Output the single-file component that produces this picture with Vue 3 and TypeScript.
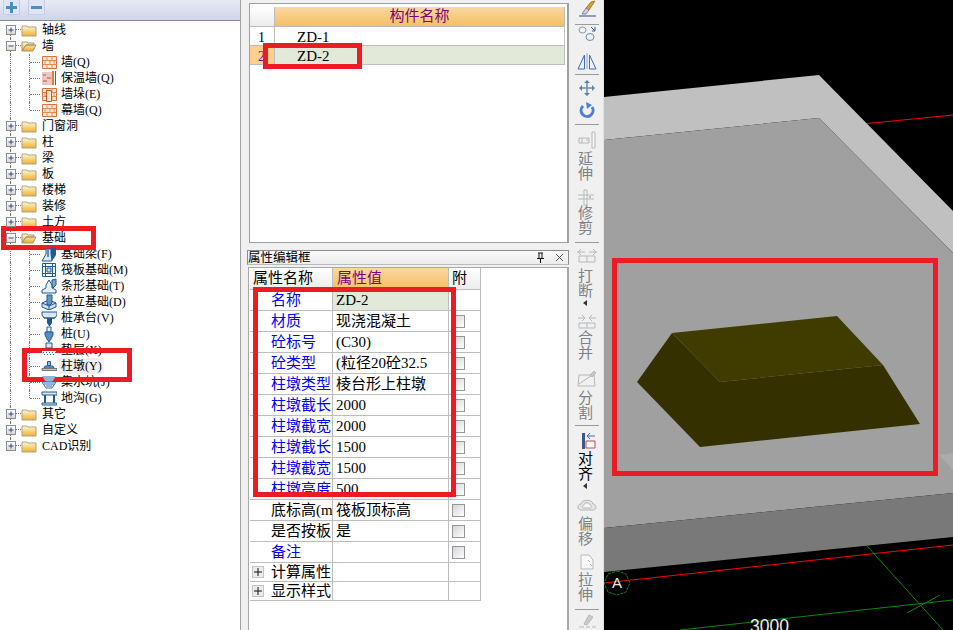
<template>
  <div class="app">
    <svg class="defs" width="0" height="0">
      <defs>
        <linearGradient id="fold" x1="0" y1="0" x2="0" y2="1">
          <stop offset="0" stop-color="#fff8d8" />
          <stop offset="1" stop-color="#eeae2c" />
        </linearGradient>
      </defs>
    </svg>

    <!-- left tree -->
    <aside class="left">
      <div class="tree-bar">
        <span class="tb-btn">
          <svg width="13" height="13" viewBox="0 0 13 13"><path d="M1 6.500h11M6.500 1v11" stroke="#4a8fc4" stroke-width="3" /></svg>
        </span>
        <span class="tb-btn">
          <svg width="13" height="13" viewBox="0 0 13 13"><path d="M1 6.500h11" stroke="#4a8fc4" stroke-width="3" /></svg>
        </span>
      </div>
      <div class="tree">
        <div
          v-for="(n, i) in nodes"
          :key="i"
          class="node"
          :class="{ child: n.child, 'last-child': n.lastChild, 'last-root': i === nodes.length - 1 }"
        >
          <template v-if="!n.child">
            <span class="exp">
              <svg width="8" height="8" viewBox="0 0 8 8">
                <path d="M1.500 4h5" stroke="#2a4f9c" />
                <path v-if="!n.open" d="M4 1.500v5" stroke="#2a4f9c" />
              </svg>
            </span>
            <svg class="ico" width="16" height="16" viewBox="0 0 16 16">
              <path v-if="n.open" d="M1 13V4h5l1 1h6v2H5L1 13zM1 13l4-6h10l-3 6z" fill="url(#fold)" stroke="#a8986c" />
              <path v-else d="M1 4h5l1 1h8v9H1z" fill="url(#fold)" stroke="#b0a27c" />
            </svg>
          </template>
          <template v-else>
            <i class="hdot"></i>
            <svg class="ico" width="16" height="16" viewBox="0 0 16 16">
              <path v-for="(p, k) in treeIcons[n.icon ?? 'brick']" :key="k" :d="p.d" :stroke="p.s ?? 'none'" :fill="p.f ?? 'none'" />
            </svg>
          </template>
          <span class="txt" :class="{ picked: n.picked }">{{ n.label }}</span>
        </div>
      </div>
    </aside>

    <!-- middle panels -->
    <main class="mid">
      <section class="names">
        <div class="names-grid">
          <div class="nrow nhead">
            <span class="rh"></span>
            <span class="nh">构件名称</span>
          </div>
          <div class="nrow">
            <span class="rh">1</span>
            <span class="nc">ZD-1</span>
          </div>
          <div class="nrow sel">
            <span class="rh">2</span>
            <span class="nc">ZD-2</span>
          </div>
        </div>
      </section>

      <div class="titlebar">
        <span>属性编辑框</span>
        <span class="tbtns">
          <svg width="11" height="11" viewBox="0 0 11 11"><path d="M3 1h5M4 1v5M7 1v5M2 6.500h7M5.500 6.500V11" stroke="#111" fill="none" /></svg>
          <svg width="11" height="11" viewBox="0 0 11 11"><path d="M2 2l7 7M9 2l-7 7" stroke="#555" fill="none" /></svg>
        </span>
      </div>
      <section class="props">
        <div class="prow phead">
          <span class="pc pname-h">属性名称</span>
          <span class="pc pval-h">属性值</span>
          <span class="pc pfu-h">附</span>
        </div>
        <div v-for="p in props" :key="p.name + p.value" class="prow" :class="{ small: p.group }">
          <span class="pc pname" :class="{ blue: p.blue }">
            <span v-if="p.group" class="plus">
              <svg width="8" height="8" viewBox="0 0 8 8"><path d="M0 4h8M4 0v8" stroke="#111" /></svg>
            </span>
            {{ p.name }}
          </span>
          <span class="pc pval" :class="{ cur: p.cur }">{{ p.value }}</span>
          <span class="pc pfu"><i v-if="p.check" class="chk"></i></span>
        </div>
      </section>
    </main>

    <!-- vertical tools -->
    <nav class="tools">
      <template v-for="(t, i) in tools" :key="i">
        <hr v-if="t.sep" class="sep" :style="{ marginTop: t.mt + 'px' }" />
        <svg
          v-else-if="t.icon"
          class="tool-ico"
          :width="24"
          :height="t.h ?? 18"
          :viewBox="`0 0 24 ${t.h ?? 18}`"
          :style="{ marginTop: t.mt + 'px' }"
        >
          <path
            v-for="(p, k) in toolIcons[t.icon]"
            :key="k"
            :d="p.d"
            :stroke="p.s ?? 'none'"
            :stroke-width="p.w ?? 1"
            :fill="p.f ?? 'none'"
          />
        </svg>
        <div v-else class="tool-label" :class="{ on: t.on }" :style="{ marginTop: t.mt + 'px' }">
          <span v-for="c in t.label" :key="c">{{ c }}</span>
          <i v-if="t.arrow" class="arrow"></i>
        </div>
      </template>
    </nav>

    <!-- 3d view -->
    <div class="view">
      <svg width="349" height="630" viewBox="604 0 349 630">
        <path d="M867 123.500L953 115" stroke="#f00" fill="none" />
        <path d="M604 97L819 75L953 211V253L819 118L604 140z" fill="#c0c0c0" />
        <path d="M604 140L819 118L953 253V493L604 528z" fill="#a0a0a0" />
        <path d="M939 455L953 453V470z" fill="#ababab" />
        <path d="M604 528L953 493V537L604 572z" fill="#797979" />
        <path d="M672 333L837 316L883 365L720 382z" fill="#403c00" />
        <path d="M637 382L672 333L720 382L883 365L920 424L700 447z" fill="#343000" />
        <path d="M604 583L953 545" stroke="#f00" fill="none" />
        <path d="M867 546L943 630" stroke="#0a8a0a" fill="none" />
        <path d="M680 630L953 600" stroke="#0a8a0a" fill="none" />
        <path d="M907 613L940 595" stroke="#0a8a0a" fill="none" />
        <path d="M617 571l9 3l4 9l-4 9l-9 3l-9-3l-4-9l4-9z" stroke="#0a8a0a" fill="none" stroke-dasharray="3 1" />
        <text x="612" y="588" class="axis">A</text>
        <text x="750" y="632" class="dim">3000</text>
      </svg>
    </div>

    <!-- red annotations -->
    <i class="mark m-base"></i>
    <i class="mark m-pier"></i>
    <i class="mark m-zd"></i>
    <i class="mark m-props"></i>
    <i class="mark m-model"></i>
  </div>
</template>

<script setup lang="ts">
interface TreeNode {
  label: string
  child?: boolean
  open?: boolean
  lastChild?: boolean
  picked?: boolean
  icon?: string
}
interface PropRow {
  name: string
  value: string
  blue?: boolean
  check?: boolean
  cur?: boolean
  group?: boolean
}
interface Shape {
  d: string
  s?: string
  f?: string
  w?: number
}
interface Tool {
  mt: number
  sep?: boolean
  icon?: string
  h?: number
  label?: string
  on?: boolean
  arrow?: boolean
}

const nodes: TreeNode[] = [
  { label: '轴线' },
  { label: '墙', open: true },
  { label: '墙(Q)', child: true, icon: 'brick' },
  { label: '保温墙(Q)', child: true, icon: 'insul' },
  { label: '墙垛(E)', child: true, icon: 'pier' },
  { label: '幕墙(Q)', child: true, icon: 'brick', lastChild: true },
  { label: '门窗洞' },
  { label: '柱' },
  { label: '梁' },
  { label: '板' },
  { label: '楼梯' },
  { label: '装修' },
  { label: '土方' },
  { label: '基础', open: true },
  { label: '基础梁(F)', child: true, icon: 'beam' },
  { label: '筏板基础(M)', child: true, icon: 'raft' },
  { label: '条形基础(T)', child: true, icon: 'strip' },
  { label: '独立基础(D)', child: true, icon: 'solo' },
  { label: '桩承台(V)', child: true, icon: 'cap' },
  { label: '桩(U)', child: true, icon: 'pile' },
  { label: '垫层(X)', child: true, icon: 'bed' },
  { label: '柱墩(Y)', child: true, icon: 'zd', picked: true },
  { label: '集水坑(J)', child: true, icon: 'sump' },
  { label: '地沟(G)', child: true, icon: 'ditch', lastChild: true },
  { label: '其它' },
  { label: '自定义' },
  { label: 'CAD识别' },
]

const props: PropRow[] = [
  { name: '名称', value: 'ZD-2', blue: true, cur: true },
  { name: '材质', value: '现浇混凝土', blue: true, check: true },
  { name: '砼标号', value: '(C30)', blue: true, check: true },
  { name: '砼类型', value: '(粒径20砼32.5', blue: true, check: true },
  { name: '柱墩类型', value: '棱台形上柱墩', blue: true, check: true },
  { name: '柱墩截长', value: '2000', blue: true, check: true },
  { name: '柱墩截宽', value: '2000', blue: true, check: true },
  { name: '柱墩截长', value: '1500', blue: true, check: true },
  { name: '柱墩截宽', value: '1500', blue: true, check: true },
  { name: '柱墩高度', value: '500', blue: true, check: true },
  { name: '底标高(m)', value: '筏板顶标高', check: true },
  { name: '是否按板', value: '是', check: true },
  { name: '备注', value: '', blue: true, check: true },
  { name: '计算属性', value: '', group: true },
  { name: '显示样式', value: '', group: true },
]

const brick: Shape[] = [
  { d: 'M1.500 2.500h14v12h-14z', f: '#fdeee2', s: '#d8703a' },
  { d: 'M1.500 6.500h14M1.500 10.500h14M6 2.500v4M11 2.500v4M4 6.500v4M9 6.500v4M13 6.500v4M6 10.500v4M11 10.500v4', s: '#e08a58' },
]

const blue = '#1d5a9c'
const treeIcons: Record<string, Shape[]> = {
  brick,
  insul: [
    { d: 'M1 2h10v13H1z', f: '#e8c8c0' },
    { d: 'M2 4h3v2H2zM6 7h4v2H6zM2 10h4v2H2z', f: '#c89088' },
    { d: 'M11 1h2v14h-2z', f: '#e07a3a' },
    { d: 'M14.500 1v14', s: '#a04a20' },
  ],
  pier: [
    ...brick,
    { d: 'M5.500 4.500h5v11h-5z', f: '#fbe4cc', s: '#c85a20' },
  ],
  beam: [
    { d: 'M1 15l4-7V3h5v5l1 7z', f: '#dce8f4', s: blue },
    { d: 'M10 3l5-2v8l-4 6-1-7z', f: blue },
    { d: 'M6 3v8h2V3z', f: '#5a8cc0' },
  ],
  raft: [
    { d: 'M1.500 1.500h13v13h-13z', f: '#fff', s: blue },
    { d: 'M4.500 1.500v13M11.500 1.500v13M1.500 4.500h13M1.500 11.500h13', s: blue },
    { d: 'M6 6h4v4H6z', f: '#c8dcf0', s: blue },
  ],
  strip: [
    { d: 'M1 15v-3l4-2V7l3-5 3 5v3l4 2v3z', f: '#e8f0f8', s: blue },
    { d: 'M11 2l4-1v6l-3 3-1-3z', f: '#7ea6cc', s: blue },
  ],
  solo: [
    { d: 'M1 9l7-3 7 3v4l-7 3-7-3z', f: '#cfe0f0', s: blue },
    { d: 'M6 1h5v8l-2 2H6z', f: '#6b96c4', s: blue },
    { d: 'M1 9l7 3 7-3M8 12v4', s: blue },
  ],
  cap: [
    { d: 'M1 2h15v3l-2 3H3L1 5z', f: '#dbe6f2', s: blue },
    { d: 'M3 8h11', s: '#555' },
    { d: 'M6 8h5v5l-2 3H8l-2-3z', f: blue },
  ],
  pile: [
    { d: 'M6 1h4v5H6z', f: '#eef4fa', s: blue },
    { d: 'M4 6h8v3l-2 4-2 3-2-3-2-4z', f: '#5a8cc0', s: blue },
  ],
  bed: [
    { d: 'M5 1h6v5H5z', f: '#dbe6f2', s: blue },
    { d: 'M1 9h14v5H1z', f: '#fff' },
    { d: 'M2 10h1v1H2zM5 10h1v1H5zM8 10h1v1H8zM11 10h1v1h-1zM14 10h1v1h-1zM3 12h1v1H3zM6 12h1v1H6zM9 12h1v1H9zM12 12h1v1h-1z', f: '#2a6cb0' },
  ],
  zd: [
    { d: 'M6.500 3.500h3v4h-3z', f: '#9cbcdc', s: blue },
    { d: 'M4 8h8l1 2H3z', f: '#8fb4d8', s: blue },
    { d: 'M1 10.500h15v2H1z', f: '#c4c4c4', s: '#777' },
  ],
  sump: [
    { d: 'M1 2l14 0-4 6H5z', f: '#8fb4d8' },
    { d: 'M1 8h14l-4 6H5z', f: '#fff', s: '#2a6cb0' },
    { d: 'M3 10h10M5 12h6', s: '#2a6cb0' },
  ],
  ditch: [
    { d: 'M1 2h15v3H1z', f: '#dbe6f2', s: blue },
    { d: 'M3 5h2v8H3zM12 5h2v8h-2z', f: blue },
    { d: 'M1 13h15v2H1z', f: '#dbe6f2', s: blue },
  ],
}

const gray = '#b4b8bc'
const toolIcons: Record<string, Shape[]> = {
  brush: [
    { d: 'M16 2l4-1-6 9-3-2z', f: '#d8a020', s: '#a88030' },
    { d: 'M11 8l3 2-3 4H7z', f: '#d8d0e0', s: '#8080a0' },
    { d: 'M4 16h17', s: '#304a78' },
  ],
  copy: [
    { d: 'M11 5a3.500 3 0 1 1-7 0a3.500 3 0 1 1 7 0z', s: '#8a9aa8' },
    { d: 'M19 12a4 3.500 0 1 1-8 0a4 3.500 0 1 1 8 0z', s: '#6d8cb0' },
    { d: 'M16 2l4 4M20 2v4h-3', s: '#3a5a9a' },
  ],
  mirror: [
    { d: 'M9.500 3v14H3z', f: '#eef3fa', s: '#3a6cc0' },
    { d: 'M14.500 3v14H21z', f: '#eef3fa', s: '#3a6cc0' },
    { d: 'M12 1v16', s: '#8aa4cc' },
  ],
  move: [
    { d: 'M12 2v14M5 9h14', s: '#6a8cb0', w: 1.5 },
    { d: 'M12 1l3 3H9zM12 17l3-3H9zM4 9l3-3v6zM20 9l-3-3v6z', f: '#5a80a8' },
  ],
  rotate: [
    { d: 'M8 5a6 6 0 1 0 9 1', s: '#4f80d8', w: 3 },
    { d: 'M11 1l6 3-5 4z', f: '#4f80d8' },
  ],
  extend: [
    { d: 'M4 7h10v5H4z', s: gray },
    { d: 'M7 7v5M11 9h3', s: gray },
    { d: 'M17 1h3v16h-3z', s: gray, f: '#f4f4f4' },
  ],
  trim: [
    { d: 'M9 2v15h3V2z', s: gray, f: '#f4f4f4' },
    { d: 'M3 7h16M3 11h16', s: gray },
    { d: 'M14 8h2v2h-2z', f: gray },
  ],
  cut: [
    { d: 'M2 6h8M14 6h8M6 3L3 6l3 3M18 3l3 3-3 3', s: gray },
    { d: 'M4 10h16v6H4zM12 10v6', s: gray },
  ],
  merge: [
    { d: 'M3 6h7M21 6h-7M7 3l3 3-3 3M17 3l-3 3 3 3', s: gray },
    { d: 'M4 11h16v5H4zM12 11v5', s: gray },
  ],
  split: [
    { d: 'M4 5h15l1 11H3z', s: gray },
    { d: 'M4 14L20 3', s: gray },
    { d: 'M15 5l4-4 2 2-4 4z', f: '#c4c8cc', s: gray },
  ],
  align: [
    { d: 'M7 1h3v16H7z', f: '#3a5a8c' },
    { d: 'M11 9h9v7h-9z', f: '#fff', s: '#b05050' },
    { d: 'M20 4H12M15 1l-3 3 3 3', s: '#3a6cc0' },
  ],
  offset: [
    { d: 'M6 13c-4 0-4-6 0-6c0-5 12-5 12 0c4 0 4 6 0 6z', s: gray, f: '#e4e4e4' },
    { d: 'M9 11c-2 0-2-3 0-3c0-3 6-3 6 0c2 0 2 3 0 3z', s: gray, f: '#f4f4f4' },
  ],
  stretch: [
    { d: 'M6 2h8l4 5v9H6z', s: gray, f: '#f8f8f8' },
    { d: 'M13 7l2 2M15 11l2 2', s: gray },
  ],
  last: [
    { d: 'M14 2l4 2-6 8-3-1z', f: '#c8ccd0', s: gray },
    { d: 'M4 14h5M11 14h4M17 14h4', s: gray },
  ],
}

const tools: Tool[] = [
  { mt: 0, icon: 'brush' },
  { mt: 6, sep: true },
  { mt: 0, icon: 'copy', h: 16 },
  { mt: 11, icon: 'mirror' },
  { mt: 4, sep: true },
  { mt: 4, icon: 'move' },
  { mt: 4, icon: 'rotate' },
  { mt: 5, sep: true },
  { mt: 6, icon: 'extend' },
  { mt: 3, label: '延伸' },
  { mt: 6, icon: 'trim' },
  { mt: 0, label: '修剪' },
  { mt: 6, sep: true },
  { mt: 3, icon: 'cut' },
  { mt: 5, label: '打断', arrow: true },
  { mt: 6, icon: 'merge' },
  { mt: 1, label: '合并' },
  { mt: 9, icon: 'split' },
  { mt: 3, label: '分割' },
  { mt: 4, sep: true },
  { mt: 6, icon: 'align' },
  { mt: 2, label: '对齐', on: true, arrow: true },
  { mt: 8, icon: 'offset' },
  { mt: 2, label: '偏移' },
  { mt: 6, icon: 'stretch' },
  { mt: 2, label: '拉伸' },
  { mt: 6, sep: true },
  { mt: 3, icon: 'last' },
]
</script>

<style>
html,
body {
  margin: 0;
  background: #f0f0f0;
  overflow: hidden;
}
</style>

<style scoped>
.app {
  position: relative;
  display: flex;
  width: 953px;
  height: 630px;
  overflow: hidden;
  background: #f0f0f0;
  font-family: "Liberation Serif", "Noto Sans CJK SC", serif;
  color: #000;
}
.defs {
  position: absolute;
}

/* tree */
.left {
  flex: none;
  width: 240px;
  border-right: 1px solid #a0a0a0;
  background: #fff;
  font-size: 12px;
}
.tree-bar {
  display: flex;
  gap: 8px;
  height: 21px;
  padding-left: 3px;
  box-sizing: border-box;
  border-bottom: 1px solid #8a8f9c;
  background: linear-gradient(#e8ebf6, #ced5ea);
}
.tb-btn {
  display: flex;
  align-items: center;
  justify-content: center;
  width: 15px;
  height: 14px;
  border: 1px solid #c2cdec;
  border-top: none;
  background: #dfe5f5;
}
.tree {
  padding-top: 1px;
}
.node {
  position: relative;
  display: flex;
  align-items: center;
  height: 16px;
  padding-left: 6px;
  white-space: nowrap;
}
.node::before {
  content: "";
  position: absolute;
  left: 10px;
  top: 0;
  bottom: 0;
  border-left: 1px dotted #777;
}
.node:first-child::before {
  top: 8px;
}
.node.last-root::before {
  bottom: 8px;
}
.node.child::after {
  content: "";
  position: absolute;
  left: 29px;
  top: 0;
  bottom: 0;
  border-left: 1px dotted #777;
}
.node.last-child::after {
  bottom: 8px;
}
.hdot {
  position: absolute;
  left: 30px;
  top: 8px;
  width: 10px;
  border-top: 1px dotted #777;
}
.exp {
  position: relative;
  z-index: 1;
  display: flex;
  flex: none;
  box-sizing: border-box;
  width: 10px;
  height: 10px;
  border: 1px solid #8c8c8c;
  background: linear-gradient(#fff, #dcdcd4);
}
.exp::after {
  content: "";
  position: absolute;
  left: 9px;
  top: 3px;
  width: 5px;
  border-top: 1px dotted #777;
}
.node:not(.child) .ico {
  margin-left: 5px;
}
.node:not(.child) .txt {
  margin-left: 5px;
}
.node.child {
  padding-left: 41px;
}
.node.child .ico {
  position: relative;
  z-index: 1;
  flex: none;
}
.node.child .txt {
  margin-left: 2px;
  padding: 0 2px;
  height: 16px;
}
.txt {
  line-height: 16px;
}
.txt.picked {
  background: #f0f0f0;
  padding-right: 5px;
}

/* names grid */
.mid {
  flex: none;
  width: 328px;
  box-sizing: border-box;
  padding: 3px 0 0 8px;
  font-size: 15px;
}
.names {
  height: 240px;
  box-sizing: border-box;
  padding-top: 3px;
  border: 1px solid #a0a0a0;
  border-right-width: 2px;
  background: #fff;
}
.names-grid {
  width: 315px;
}
.nrow {
  display: flex;
  box-sizing: border-box;
  height: 19px;
  border-bottom: 1px solid #bdbdbd;
  border-right: 1px solid #bdbdbd;
  line-height: 21px;
}
.nhead {
  height: 20px;
  line-height: 19px;
}
.rh {
  flex: none;
  width: 25px;
  box-sizing: border-box;
  padding-left: 8px;
  border-right: 1px solid #bdbdbd;
  background: linear-gradient(#fff, #ececec);
  font-size: 14px;
}
.nrow:not(.nhead) .rh {
  background: #fff;
}
.nrow.sel .rh {
  background: #fdd08c;
  color: #800080;
}
.nh {
  flex: 1;
  text-align: center;
  color: #800080;
  background: linear-gradient(#f9d8a0, #f4c062);
}
.nc {
  flex: 1;
  padding-left: 22px;
}
.nrow.sel .nc {
  background: #e3e9d8;
}

/* property box */
.titlebar {
  display: flex;
  justify-content: space-between;
  align-items: center;
  box-sizing: border-box;
  height: 15px;
  margin: 7px 0 0 -2px;
  border: 1px solid #8c8c8c;
  border-bottom-color: #bbb;
  background: linear-gradient(#fafafa, #ececec);
  font-size: 12.500px;
  line-height: 14px;
}
.tbtns {
  display: flex;
  gap: 8px;
  padding-right: 3px;
}
.props {
  height: 364px;
  box-sizing: border-box;
  margin: 2px 0 0 -1px;
  padding-left: 1px;
  border: 1px solid #a8a8a8;
  border-right-width: 2px;
  background: #fff;
}
.prow {
  display: grid;
  grid-template-columns: 83px 116px 32px;
  width: 231px;
  height: 21px;
  box-sizing: border-box;
  border-bottom: 1px solid #bdbdbd;
  line-height: 20px;
}
.prow.phead {
  height: 22px;
}
.prow.small {
  height: 19px;
  line-height: 18px;
}
.pc {
  display: block;
  box-sizing: border-box;
  border-right: 1px solid #bdbdbd;
  overflow: hidden;
  white-space: nowrap;
}
.pname {
  position: relative;
  padding-left: 21px;
}
.pname.blue {
  color: #0000ff;
}
.pval {
  padding-left: 3px;
}
.pval.cur {
  background: #e3e9d8;
}
.pname-h {
  padding-left: 3px;
  background: linear-gradient(#fff, #ececec);
}
.pval-h {
  padding-left: 4px;
  color: #800080;
  background: linear-gradient(#f9d8a0, #f4c062);
}
.pfu-h {
  padding-left: 3px;
  background: linear-gradient(#fff, #ececec);
}
.pfu {
  display: flex;
  align-items: center;
  padding-left: 3px;
}
.chk {
  display: block;
  width: 13px;
  height: 13px;
  box-sizing: border-box;
  border: 1px solid #969696;
  background: linear-gradient(135deg, #d4d4dc, #fff);
}
.plus {
  position: absolute;
  left: 2px;
  top: 3px;
  display: flex;
  align-items: center;
  justify-content: center;
  width: 12px;
  height: 12px;
  box-sizing: border-box;
  border: 1px solid #c4c4c4;
  background: #ececec;
}

/* toolbar */
.tools {
  flex: none;
  display: flex;
  flex-direction: column;
  align-items: center;
  width: 35px;
  box-sizing: border-box;
  padding-left: 2px;
  border-right: 1px solid #e0e0e0;
  font-size: 15px;
  background: #f0f0f0;
}
.tool-ico {
  flex: none;
  display: block;
}
.sep {
  flex: none;
  width: 24px;
  height: 1px;
  margin-bottom: 0;
  margin-left: 0;
  margin-right: 0;
  border: none;
  background: #9a9a9a;
}
.tool-label {
  flex: none;
  display: flex;
  flex-direction: column;
  align-items: center;
  width: 16px;
  margin-left: -3px;
  color: #7d8288;
  line-height: 15px;
}
.tool-label.on {
  color: #000;
}
.arrow {
  width: 0;
  height: 0;
  margin: 1px 0 0 -1px;
  border: 3px solid transparent;
  border-left: none;
  border-right: 4px solid #333;
  box-sizing: content-box;
}

/* 3d view */
.view {
  flex: 1;
  background: #000;
  overflow: hidden;
}
.view svg {
  display: block;
}
.axis {
  font-family: "Liberation Sans", sans-serif;
  font-size: 15px;
  fill: #e8e8e8;
}
.dim {
  font-family: "Liberation Sans", sans-serif;
  font-size: 17.500px;
  fill: #eee;
}

/* red boxes drawn over the screenshot */
.mark {
  position: absolute;
  box-sizing: border-box;
  border: 5px solid #ed1c24;
  pointer-events: none;
}
.m-base {
  left: 1px;
  top: 226px;
  width: 95px;
  height: 24px;
}
.m-pier {
  left: 22px;
  top: 348px;
  width: 110px;
  height: 34px;
}
.m-zd {
  left: 263px;
  top: 43px;
  width: 99px;
  height: 26px;
}
.m-props {
  left: 253px;
  top: 287px;
  width: 203px;
  height: 210px;
}
.m-model {
  left: 612px;
  top: 258px;
  width: 326px;
  height: 218px;
}
</style>
